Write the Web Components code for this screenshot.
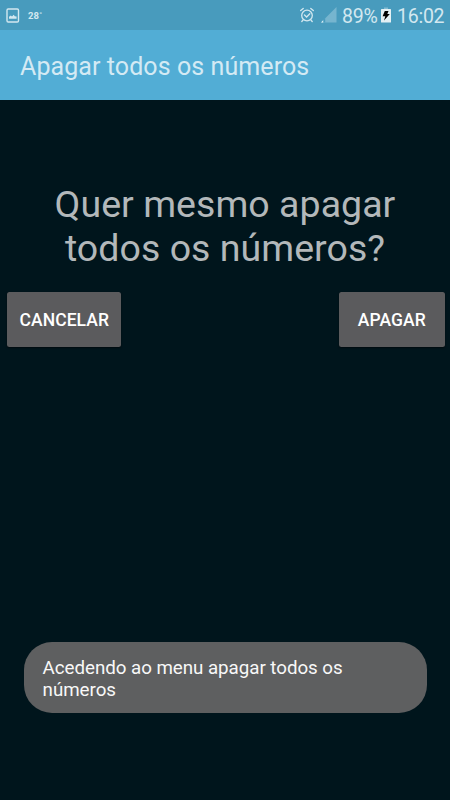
<!DOCTYPE html>
<html lang="pt">
<head>
<meta charset="utf-8">
<title>Apagar todos os números</title>
<style>
html,body{margin:0;height:100%;background:#00151c}
body{font-family:Roboto,"Liberation Sans",sans-serif}
</style>
</head>
<body>
<confirm-screen></confirm-screen>
<script>
const define = (name, html) => customElements.define(name, class extends HTMLElement {
  constructor() {
    super();
    const t = document.createElement('template');
    t.innerHTML = html;
    this.attachShadow({mode: 'open'}).append(t.content.cloneNode(true));
  }
});

define('status-bar', `
<style>
:host{display:flex;align-items:center;height:30px;box-sizing:border-box;padding:0 5px 0 5.5px;background:#489bbd;color:#d3e8f0;white-space:nowrap}
svg{display:block;flex:none}
.temp{font-size:9.5px;font-weight:700;line-height:30px;margin-left:8.5px;padding-top:1px;letter-spacing:.1px}
.alarm{margin-left:auto}
.signal{margin-left:6px}
.pct,.time{font-size:19.5px;height:30px;line-height:28px;padding-top:3px;box-sizing:border-box;letter-spacing:-.25px}
.pct{margin-left:5px;width:38px}
.battery{margin-left:1px}
.time{margin-left:6px;width:48px}
</style>
<svg width="14" height="15" viewBox="0 0 14 15"><rect x="1" y="1" width="11.5" height="13" rx="1.2" fill="none" stroke="#d3e8f0" stroke-width="1.4"/><path d="M3 10.8V8.8L4.8 7.6 6 8.5 7.7 6.8 8.8 8.3 10.6 8.6V10.8Z" fill="#d3e8f0"/></svg>
<span class="temp">28˚</span>
<svg class="alarm" width="15" height="16" viewBox="0 0 15 16" fill="none" stroke="#d3e8f0" stroke-width="1.3" stroke-linecap="round"><circle cx="7" cy="8.5" r="5.3"/><path d="M.7 3.6 3.2 1.5M10.8 1.5 13.3 3.6M3.2 12.8 1.8 14.5M10.8 12.8 12.2 14.5M4.5 8 6.6 10 9.8 6.7"/></svg>
<svg class="signal" width="16" height="16" viewBox="0 0 16 16"><path d="M0 15.5 15.5 0V15.5Z" fill="#76b5cf"/><path d="M0 15.5 2.4 13.1V15.5Z" fill="#e2f2f8"/><path d="M2.4 13.1 4.2 11.3V15.5H2.4Z" fill="#489bbd"/></svg>
<span class="pct">89%</span>
<svg class="battery" width="10" height="16" viewBox="0 0 10 16"><path d="M3 .5H7V2H3Z" fill="#83bbd2"/><rect y="2" width="10" height="13.5" rx=".6" fill="#e4f0f4"/><path d="M3.8 4H7.5L6.3 7H8.8L3 13.5 4.3 9.2H1.6Z" fill="#000"/></svg>
<span class="time">16:02</span>`);

define('app-bar', `
<style>
:host{display:flex;align-items:center;height:70px;box-sizing:border-box;padding:3px 20px 0;background:#52add5;color:#d4eaf4;font-size:25px;line-height:30px;letter-spacing:.08px;white-space:nowrap}
</style><slot></slot>`);

define('action-button', `
<style>
:host{display:block}
button{display:block;width:100%;height:55px;padding:2px 0 0;border:0;border-radius:2.5px;background:#5b5b5d;color:#fff;font:500 17.5px/21px Roboto,"Liberation Sans",sans-serif;letter-spacing:.08px;box-shadow:0 1px 2px #0008}
</style><button><slot></slot></button>`);

define('toast-message', `
<style>
:host{display:block;box-sizing:border-box;height:70.5px;padding:14.5px 19px;border-radius:28px;background:#5e5f60;color:#f8f8f8;font-size:18.75px;line-height:22px;letter-spacing:-.04px}
</style><slot></slot>`);

define('confirm-screen', `
<style>
:host{display:flex;flex-direction:column;height:800px;background:#00151c;overflow:hidden}
h1{margin:82px 0 0;font-size:37.5px;line-height:44px;letter-spacing:.04px;font-weight:400;color:#b3b8ba;text-align:center}
.actions{display:flex;justify-content:space-between;padding:0 5.5px 0 7.3px;margin-top:22px}
.cancel{width:114px}.erase{width:105.3px}
toast-message{margin:auto 23.4px 87.4px 23.6px}
</style>
<status-bar></status-bar>
<app-bar>Apagar todos os números</app-bar>
<h1>Quer mesmo apagar<br>todos os números?</h1>
<div class="actions"><action-button class="cancel">CANCELAR</action-button><action-button class="erase">APAGAR</action-button></div>
<toast-message>Acedendo ao menu apagar todos os<br>números</toast-message>`);
</script>
</body>
</html>
